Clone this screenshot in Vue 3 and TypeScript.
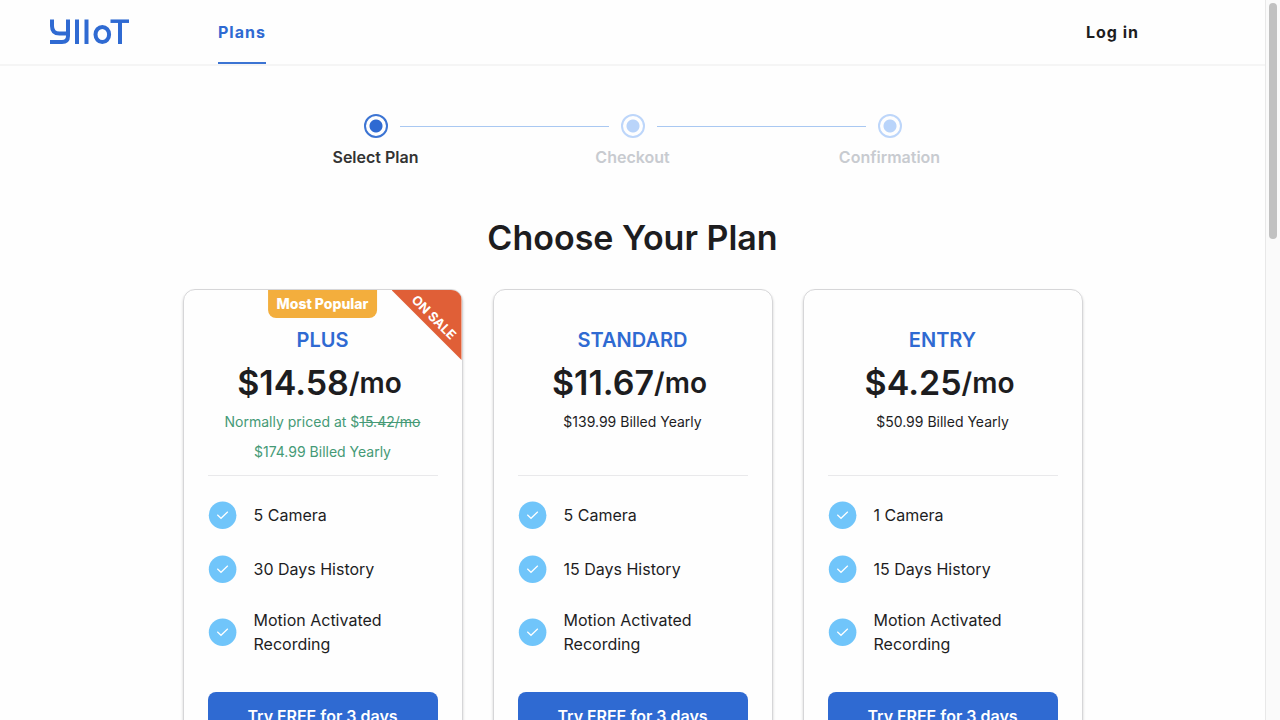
<script setup lang="ts">
interface Plan {
  name: string
  price: string
  usual?: string
  billed: string
  popular?: boolean
  sale?: boolean
  features: string[]
}

const steps: { label: string; active: boolean }[] = [
  { label: 'Select Plan', active: true },
  { label: 'Checkout', active: false },
  { label: 'Confirmation', active: false },
]

const plans: Plan[] = [
  {
    name: 'PLUS',
    price: '$14.58',
    usual: '15.42/mo',
    billed: '$174.99 Billed Yearly',
    popular: true,
    sale: true,
    features: ['5 Camera', '30 Days History', 'Motion Activated Recording'],
  },
  {
    name: 'STANDARD',
    price: '$11.67',
    billed: '$139.99 Billed Yearly',
    features: ['5 Camera', '15 Days History', 'Motion Activated Recording'],
  },
  {
    name: 'ENTRY',
    price: '$4.25',
    billed: '$50.99 Billed Yearly',
    features: ['1 Camera', '15 Days History', 'Motion Activated Recording'],
  },
]
</script>

<template>
  <div class="shell">
    <div class="page">
      <header class="header">
        <a class="logo" href="#" aria-label="YIIoT">
          <svg width="80" height="26" viewBox="0 0 80 26" fill="none" stroke="#2f6ad2" stroke-width="4">
            <path d="M2 0.5V7Q2 14.500 9.500 14.500H18" />
            <path d="M18 0.5V17Q18 23 12 23H0" />
            <path d="M27 0.500V25M36.500 0.500V25" />
            <ellipse cx="52.300" cy="15.500" rx="6.800" ry="7.600" />
            <path d="M60.500 2.200H79" stroke-width="3.500" />
            <path d="M70 2.200V25" />
          </svg>
        </a>
        <nav class="nav">
          <a class="nav-link" href="#" aria-current="page">Plans</a>
        </nav>
        <a class="login" href="#">Log in</a>
      </header>

      <main class="main">
        <ol class="steps">
          <li v-for="step in steps" :key="step.label" class="step" :class="{ active: step.active }">
            <div class="track">
              <span class="line"></span>
              <span class="dot"></span>
              <span class="line"></span>
            </div>
            <span>{{ step.label }}</span>
          </li>
        </ol>

        <h1 class="title">Choose Your Plan</h1>

        <div class="plans">
          <section v-for="plan in plans" :key="plan.name" class="card">
            <div v-if="plan.popular" class="popular">Most Popular</div>
            <div v-if="plan.sale" class="sale"><span>ON SALE</span></div>
            <h2 class="name">{{ plan.name }}</h2>
            <p class="price"><span>{{ plan.price }}</span><small>/mo</small></p>
            <div class="notes" :class="{ discounted: plan.sale }">
              <p v-if="plan.usual">Normally priced at $<s>{{ plan.usual }}</s></p>
              <p>{{ plan.billed }}</p>
            </div>
            <ul class="features">
              <li v-for="feature in plan.features" :key="feature" class="feature">
                <svg class="check" width="30" height="30" viewBox="0 0 30 30" fill="none">
                  <circle cx="14.600" cy="15.300" r="13.800" fill="#70c5fa" />
                  <path d="M9.300 14.800L13 18.300L19.800 11.800" stroke="#fff" stroke-width="1.200" />
                </svg>
                <span>{{ feature }}</span>
              </li>
            </ul>
            <button class="cta" type="button">Try FREE for 3 days</button>
          </section>
        </div>
      </main>
    </div>
    <div class="rail" aria-hidden="true"><div class="thumb"></div></div>
  </div>
</template>

<style>
body {
  margin: 0;
}
</style>

<style scoped>
* {
  box-sizing: border-box;
}

.shell {
  display: flex;
  height: 100vh;
  overflow: hidden;
  background: #fefefe;
  color: #1d1d1f;
  font-family: Inter, 'Liberation Sans', sans-serif;
  font-size: 16px;
  line-height: 24px;
}

.page {
  flex: 1;
  min-width: 0;
}

.header {
  display: flex;
  align-items: center;
  height: 66px;
  padding: 0 126px 0 50px;
  border-bottom: 2px solid #f5f5f5;
}

.logo {
  display: flex;
  width: 80px;
  margin-right: 88px;
}

.nav {
  flex: 1;
  display: flex;
  align-self: stretch;
}

.nav-link,
.login {
  font-weight: 700;
  letter-spacing: 1px;
  text-decoration: none;
}

.nav-link {
  display: flex;
  align-items: center;
  border-top: 2px solid transparent;
  border-bottom: 2px solid #3c74d3;
  color: #2f6ad2;
}

.login {
  color: #1d1d1f;
}

.main {
  padding: 48px 24px 0;
}

.steps {
  display: grid;
  grid-template-columns: repeat(3, 1fr);
  max-width: 771px;
  margin: 0 auto;
  padding: 0;
  list-style: none;
}

.step {
  display: flex;
  flex-direction: column;
  gap: 7px;
  color: #c8cbd0;
  font-weight: 600;
  text-align: center;
}

.step.active {
  color: #333;
}

.track {
  display: flex;
  align-items: center;
  gap: 12px;
}

.line {
  flex: 1;
  height: 1px;
  background: #a9c8f2;
}

.step:first-child .line:first-child,
.step:last-child .line:last-child {
  visibility: hidden;
}

.dot {
  width: 24px;
  height: 24px;
  border: 2px solid #bdd6fa;
  border-radius: 50%;
  background: radial-gradient(circle, #b9d4fa 6px, transparent 7px);
}

.active .dot {
  border-color: #3c74d3;
  background: radial-gradient(circle, #2f6ad2 6px, transparent 7px);
}

.title {
  margin: 47px 0 29px;
  font-size: 34px;
  font-weight: 600;
  line-height: 44px;
  text-align: center;
}

.plans {
  display: grid;
  grid-template-columns: repeat(3, 1fr);
  gap: 30px;
  max-width: 900px;
  margin: 0 auto;
}

.card {
  position: relative;
  display: flex;
  flex-direction: column;
  padding: 37px 24px 24px;
  border: 1px solid #d6d6d8;
  border-radius: 12px;
  box-shadow: 0 2px 3px rgba(0, 0, 0, 0.18);
  text-align: center;
}

.popular {
  position: absolute;
  top: 0;
  left: 50%;
  transform: translateX(-50%);
  padding: 2px 9px;
  border-radius: 0 0 8px 8px;
  background: #f3ae3d;
  color: #fff;
  font-size: 14px;
  font-weight: 800;
  white-space: nowrap;
}

.sale {
  position: absolute;
  top: 0;
  right: 0;
  display: grid;
  place-items: center;
  width: 70px;
  height: 70px;
  padding: 0 0 16px 14px;
  border-top-right-radius: 11px;
  background: #e05f37;
  clip-path: polygon(0 0, 100% 0, 100% 100%);
  color: #fff;
  font-size: 13px;
  font-weight: 700;
  white-space: nowrap;
}

.sale span {
  transform: rotate(45deg);
}

.name {
  margin: 0;
  color: #2f6ad2;
  font-size: 20px;
  font-weight: 600;
  line-height: 26px;
}

.price {
  display: flex;
  align-items: center;
  justify-content: center;
  margin: 8px 0 0;
  padding-right: 6px;
  font-size: 34px;
  font-weight: 600;
  line-height: 44px;
}

.price small {
  font-size: 28px;
}

.notes {
  min-height: 60px;
  margin-top: 2px;
  font-size: 14px;
  line-height: 30px;
}

.notes.discounted {
  color: #459a76;
}

.notes p {
  margin: 0;
}

.features {
  margin: 8px 0 24px;
  padding: 12px 0 0;
  border-top: 1px solid #e9e9eb;
  list-style: none;
  text-align: left;
}

.feature {
  display: flex;
  align-items: center;
  gap: 16px;
  padding: 12px 0;
}

.check {
  flex: none;
}

.cta {
  height: 48px;
  border: 0;
  border-radius: 8px;
  background: #2f6ad2;
  color: #fff;
  font-family: inherit;
  font-size: 16px;
  font-weight: 600;
}

.rail {
  width: 15px;
  padding: 3px;
  border-left: 1px solid #e8e8e8;
  background: #fafafa;
}

.thumb {
  width: 8px;
  height: 33%;
  border-radius: 4px;
  background: #c1c1c1;
}
</style>
